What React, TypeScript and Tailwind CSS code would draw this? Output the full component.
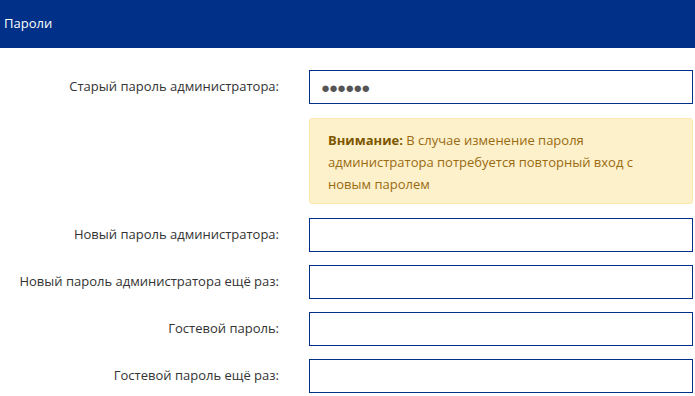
import React from 'react';

const font = { fontFamily: '"Open Sans", "Noto Sans", sans-serif' };

const Row: React.FC<{ label: string; value?: string }> = ({ label, value }) => (
  <div className="flex items-center">
    <label className="w-[279px] shrink-0 text-right text-[13px] text-[#333]">{label}</label>
    <div className="ml-[30px] flex-1">
      <div className="flex h-[34px] items-center border border-[#003087] bg-white px-[11px]">
        {value && <span className="text-[15px] tracking-[-1px] text-[#555]">{value}</span>}
      </div>
    </div>
  </div>
);

export default function App() {
  return (
    <div className="min-h-[396px] w-[695px] bg-white" style={font}>
      <div className="flex h-[48px] items-center bg-[#003087] px-[4px] text-[13px] text-white">Пароли</div>
      <div className="flex flex-col pr-[2px] pt-[22px]">
        <Row label="Старый пароль администратора:" value="●●●●●●" />
        <div className="ml-[309px] mt-[14px] rounded-[3px] border border-[#fbe9b0] bg-[#fdf1cb] px-[18px] pb-[8px] pt-[10px] text-[13px] leading-[22px] text-[#9a6a10]">
          <b className="text-[#7d5600]">Внимание:</b> В случае изменение пароля администратора потребуется повторный вход с новым паролем
        </div>
        <div className="mt-[14px] flex flex-col gap-[13px]">
          <Row label="Новый пароль администратора:" />
          <Row label="Новый пароль администратора ещё раз:" />
          <Row label="Гостевой пароль:" />
          <Row label="Гостевой пароль ещё раз:" />
        </div>
      </div>
    </div>
  );
}
